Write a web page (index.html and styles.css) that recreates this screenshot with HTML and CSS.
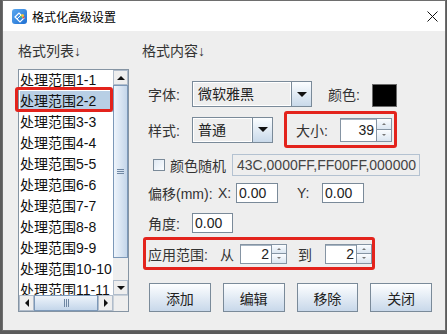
FILE: index.html
```html
<!DOCTYPE html>
<html lang="zh-CN">
<head>
  <meta charset="UTF-8" />
  <title>格式化高级设置</title>
  <link rel="stylesheet" href="styles.css">
</head>
<body>
  <div class="window">
    <div class="titlebar">
      <svg class="app-icon" width="15" height="15" viewBox="0 0 15 15">
        <defs>
          <linearGradient id="ig" x1="0" y1="0" x2="1" y2="1">
            <stop offset="0" stop-color="#5aa8f0"/>
            <stop offset="1" stop-color="#1f6fd2"/>
          </linearGradient>
        </defs>
        <rect x="0" y="0" width="15" height="15" rx="3" fill="url(#ig)"/>
        <path d="M3 8 L7 4 L12 9 L8 13 Z" fill="none" stroke="#fff" stroke-width="1.2"/>
        <path d="M5 10 L9 6" stroke="#fff" stroke-width="1"/>
        <circle cx="10.5" cy="6.5" r="1.6" fill="#f5c842"/>
        <circle cx="11.5" cy="8.5" r="1.1" fill="#e84a3c"/>
        <circle cx="9" cy="8" r="1" fill="#4cc46a"/>
      </svg>
      <span class="title">格式化高级设置</span>
      <svg class="close" width="11" height="11" viewBox="0 0 11 11">
        <path d="M0.5 0.5 L10.5 10.5 M10.5 0.5 L0.5 10.5" stroke="#111" stroke-width="1"/>
      </svg>
    </div>

    <div class="content">
      <!-- 格式列表 -->
      <div class="left">
        <div class="caption">格式列表↓</div>
        <div class="listbox">
          <div class="viewport">
            <div class="item">处理范围1-1</div>
            <div class="item selected">处理范围2-2</div>
            <div class="item">处理范围3-3</div>
            <div class="item">处理范围4-4</div>
            <div class="item">处理范围5-5</div>
            <div class="item">处理范围6-6</div>
            <div class="item">处理范围7-7</div>
            <div class="item">处理范围8-8</div>
            <div class="item">处理范围9-9</div>
            <div class="item">处理范围10-10</div>
            <div class="item">处理范围11-11</div>
          </div>
          <div class="vscroll">
            <div class="sbtn"><span class="tri up"></span></div>
            <div class="thumb vthumb"><span class="grip-h"></span></div>
            <div class="track"></div>
            <div class="sbtn"><span class="tri down"></span></div>
          </div>
          <div class="hscroll">
            <div class="sbtn"><span class="tri left-t"></span></div>
            <div class="thumb hthumb"><span class="grip-v"></span></div>
            <div class="sbtn"><span class="tri right-t"></span></div>
          </div>
          <div class="corner"></div>
          <div class="mark"></div>
        </div>
      </div>

      <!-- 格式内容 -->
      <div class="right">
        <div class="caption">格式内容↓</div>

        <div class="row row-font">
          <span class="lbl">字体:</span>
          <div class="combo wide">
            <span class="combo-text">微软雅黑</span>
            <span class="combo-btn"><span class="tri combo-tri"></span></span>
          </div>
          <span class="lbl color-lbl">颜色:</span>
          <span class="swatch"></span>
        </div>

        <div class="row row-style">
          <span class="lbl">样式:</span>
          <div class="combo narrow">
            <span class="combo-text">普通</span>
            <span class="combo-btn"><span class="tri combo-tri"></span></span>
          </div>
          <div class="redbox size-box">
            <span class="lbl size-lbl">大小:</span>
            <div class="spinner big">
              <span class="spin-val">39</span>
              <span class="spin-btns">
                <span class="spin-b"><span class="tri tiny-up"></span></span>
                <span class="spin-b"><span class="tri tiny-down"></span></span>
              </span>
            </div>
          </div>
        </div>

        <div class="row row-random">
          <span class="check"></span>
          <span class="check-lbl">颜色随机</span>
          <div class="field colors"><span>43C,0000FF,FF00FF,000000</span></div>
        </div>

        <div class="row row-offset">
          <span class="lbl offset-lbl">偏移(mm):</span>
          <span class="lbl x-lbl">X:</span>
          <div class="field num">0.00</div>
          <span class="lbl y-lbl">Y:</span>
          <div class="field num">0.00</div>
        </div>

        <div class="row row-angle">
          <span class="lbl">角度:</span>
          <div class="field num angle">0.00</div>
        </div>

        <div class="redbox range-box">
          <span class="lbl range-lbl">应用范围:</span>
          <span class="lbl from-lbl">从</span>
          <div class="spinner small">
            <span class="spin-val">2</span>
            <span class="spin-btns">
              <span class="spin-b"><span class="tri tiny-up"></span></span>
              <span class="spin-b"><span class="tri tiny-down"></span></span>
            </span>
          </div>
          <span class="lbl to-lbl">到</span>
          <div class="spinner small">
            <span class="spin-val">2</span>
            <span class="spin-btns">
              <span class="spin-b"><span class="tri tiny-up"></span></span>
              <span class="spin-b"><span class="tri tiny-down"></span></span>
            </span>
          </div>
        </div>

        <div class="buttons">
          <button class="btn">添加</button>
          <button class="btn">编辑</button>
          <button class="btn">移除</button>
          <button class="btn">关闭</button>
        </div>
      </div>
    </div>
  </div>
</body>
</html>
```

FILE: styles.css
```css
* { box-sizing: border-box; }
body {
  margin: 0;
  background: #5c5c5c;
  font-family: "Liberation Sans", "Noto Sans CJK SC", sans-serif;
  font-size: 14px;
  color: #222;
}
.window {
  margin-left: 2px;
  width: 444px;
  height: 331px;
  border: 1px solid #6e6e6e;
  background: #eeeeee;
  display: flex;
  flex-direction: column;
}
.titlebar {
  height: 30px;
  background: #fff;
  display: flex;
  align-items: center;
  padding-left: 9px;
  flex-shrink: 0;
}
.title {
  margin-left: 5px;
  font-size: 12px;
  color: #000;
}
.close { margin-left: auto; margin-right: 7px; }

.content {
  display: flex;
  padding-left: 15px;
}
.caption {
  margin-top: 10px;
  height: 20px;
  line-height: 20px;
  color: #333;
}

/* list */
.left { width: 111px; }
.listbox {
  position: relative;
  margin-top: 8px;
  width: 111px;
  height: 243px;
  border: 1px solid #8594a3;
  display: grid;
  grid-template-columns: 94px 15px;
  grid-template-rows: 225px 16px;
  background: #fff;
}
.viewport { overflow: hidden; padding-left: 1px; }
.item {
  height: 21px;
  line-height: 21px;
  white-space: nowrap;
  color: #111;
}
.item.selected { background: #b8cfe5; }
.mark {
  position: absolute;
  left: -4px;
  top: 17px;
  width: 98px;
  height: 25px;
  border: 3px solid #e3231c;
  border-radius: 3px;
}
.vscroll { display: flex; flex-direction: column; background: #eeeeee; }
.hscroll { display: flex; background: #eeeeee; }
.corner { background: #eeeeee; border-top: 1px solid #c8d0d8; border-left: 1px solid #c8d0d8; }
.sbtn {
  width: 15px;
  height: 15px;
  flex-shrink: 0;
  background: #eeeeee;
  border: 1px solid #b0bccb;
  display: flex;
  align-items: center;
  justify-content: center;
}
.hscroll .sbtn { height: 16px; }
.thumb {
  background: linear-gradient(to right, #eef4fb, #c4d6ea);
  border: 1px solid #7c98b8;
  display: flex;
  align-items: center;
  justify-content: center;
}
.vthumb { height: 173px; }
.hthumb { width: 64px; background: linear-gradient(#eef4fb, #c4d6ea); }
.track { flex: 1; }
.grip-h {
  width: 7px;
  height: 5px;
  border-top: 1px solid #6f87a3;
  border-bottom: 1px solid #6f87a3;
  position: relative;
}
.grip-h::after {
  content: "";
  position: absolute;
  left: 0; right: 0; top: 1px;
  border-top: 1px solid #6f87a3;
}
.grip-v {
  width: 5px;
  height: 8px;
  border-left: 1px solid #6f87a3;
  border-right: 1px solid #6f87a3;
  position: relative;
}
.grip-v::after {
  content: "";
  position: absolute;
  top: 0; bottom: 0; left: 1px;
  border-left: 1px solid #6f87a3;
}
.tri { width: 0; height: 0; border-style: solid; }
.tri.up { border-width: 0 4px 4px 4px; border-color: transparent transparent #111 transparent; }
.tri.down { border-width: 4px 4px 0 4px; border-color: #111 transparent transparent transparent; }
.tri.left-t { border-width: 4px 4px 4px 0; border-color: transparent #111 transparent transparent; }
.tri.right-t { border-width: 4px 0 4px 4px; border-color: transparent transparent transparent #111; }

/* right panel */
.right { margin-left: 13px; width: 290px; }
.row { display: flex; align-items: center; }
.lbl { white-space: nowrap; color: #333; }
.row .lbl:first-child { width: 50px; padding-left: 6px; }

.row-font { margin-top: 20px; height: 26px; }
.combo {
  height: 26px;
  display: flex;
  border: 1px solid #7a8a99;
  background: #eeeeee;
}
.combo.wide { width: 120px; }
.combo.narrow { width: 81px; }
.combo-text {
  flex: 1;
  padding-left: 4px;
  line-height: 22px;
  border: 1px solid #fff;
  color: #222;
}
.combo-btn {
  width: 20px;
  border-left: 1px solid #7a8a99;
  background: linear-gradient(#fbfdff, #c9d9ea);
  display: flex;
  align-items: center;
  justify-content: center;
}
.combo-tri { border-width: 5px 5px 0 5px; border-color: #111 transparent transparent transparent; }
.color-lbl { margin-left: 16px; width: 44px; }
.swatch {
  width: 25px;
  height: 23px;
  background: #000;
  border: 1px solid #6a6a6a;
  margin-top: 3px;
}

.row-style { margin-top: 4px; height: 37px; }
.redbox {
  border: 3px solid #e3231c;
  border-radius: 3px;
  display: flex;
  align-items: center;
}
.size-box { margin-left: 11px; width: 113px; height: 37px; padding-left: 3px; }
.size-lbl { width: 45px; }

.spinner {
  display: flex;
  border: 1px solid #8594a3;
  background: #fff;
}
.spinner.big { width: 52px; height: 24px; }
.spinner.small { width: 47px; height: 20px; }
.spin-val {
  flex: 1;
  text-align: right;
  padding-right: 2px;
  border-top: 1px solid #a6b4c2;
  line-height: 20px;
  color: #222;
}
.spinner.small .spin-val { line-height: 17px; }
.spin-btns {
  width: 15px;
  display: flex;
  flex-direction: column;
  border-left: 1px solid #8594a3;
}
.spin-b {
  flex: 1;
  background: linear-gradient(#fbfdff, #dbe6f1);
  display: flex;
  align-items: center;
  justify-content: center;
}
.spin-b + .spin-b { border-top: 1px solid #8594a3; }
.tiny-up { border-width: 0 2px 2px 2px; border-color: transparent transparent #777 transparent; }
.tiny-down { border-width: 2px 2px 0 2px; border-color: #777 transparent transparent transparent; }

.row-random { margin-top: 6px; height: 22px; }
.check {
  margin-left: 11px;
  width: 12px;
  height: 12px;
  border: 1px solid #7a8a99;
  background: linear-gradient(135deg, #dfe8f2, #fbfdff);
}
.check-lbl { margin-left: 5px; width: 56px; color: #333; }
.field {
  border: 1px solid #7a8a99;
  background: #fff;
  height: 20px;
  line-height: 18px;
  padding-left: 2px;
  color: #222;
}
.field.colors {
  margin-left: 6px;
  width: 188px;
  height: 22px;
  line-height: 20px;
  border-color: #b4c2d1;
  background: #eeeeee;
  color: #444;
  overflow: hidden;
  white-space: nowrap;
  display: flex;
  justify-content: flex-end;
  padding-right: 3px;
}
.field.num { width: 42px; }
.field.angle { width: 41px; }

.row-offset { margin-top: 7px; height: 20px; }
.row .lbl.offset-lbl { width: 70px; }
.x-lbl { width: 24px; padding-left: 6px; }
.y-lbl { margin-left: 19px; width: 25px; }

.row-angle { margin-top: 10px; height: 20px; }

.range-box {
  margin-top: 4px;
  margin-left: 1px;
  width: 232px;
  height: 33px;
  padding-left: 2px;
}
.range-lbl { width: 72px; }
.from-lbl { width: 20px; }
.to-lbl { margin-left: 11px; width: 27px; }

.buttons {
  margin-top: 13px;
  margin-left: 7px;
  display: flex;
  gap: 12px;
}
.btn {
  width: 62px;
  height: 29px;
  padding: 0;
  font-family: inherit;
  font-size: 14px;
  color: #222;
  border: 1px solid #7a8a99;
  border-radius: 0;
  background: linear-gradient(#fdfeff, #c8d8ea);
}
```
